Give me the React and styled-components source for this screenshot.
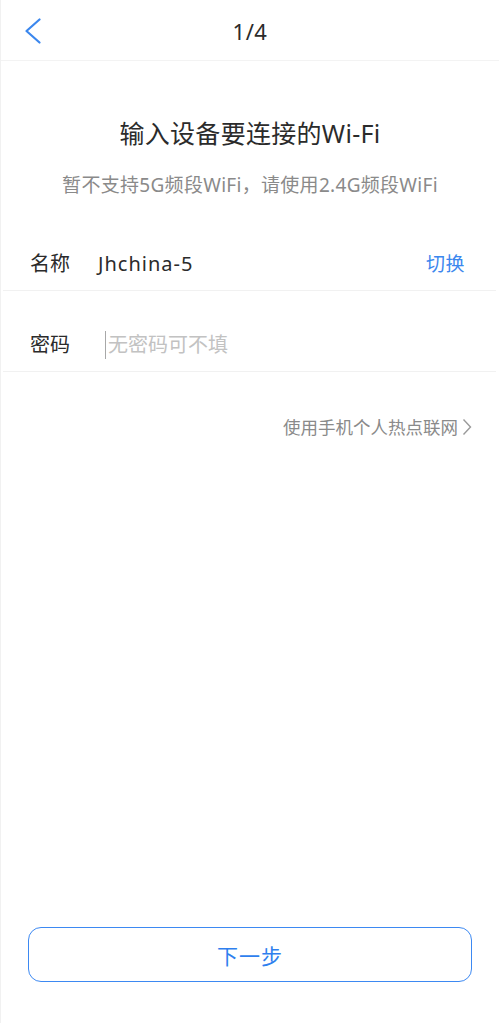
import React from "react";
import styled, { createGlobalStyle } from "styled-components";

const GlobalStyle = createGlobalStyle`
  html, body { margin: 0; padding: 0; background: #fff; }
  body { font-family: "Noto Sans", "Noto Sans CJK SC", sans-serif; color: #333; }
  * { box-sizing: border-box; }
`;

const Page = styled.div`
  height: 100vh;
  display: flex;
  flex-direction: column;
  background: #fff;
  border-left: 1px solid #f1f1f1;
`;

const Header = styled.header`
  height: 61px;
  display: grid;
  grid-template-columns: 1fr auto 1fr;
  align-items: center;
  border-bottom: 1px solid #f3f3f3;
  padding: 2px 24px 0 24px;
`;

const BackButton = styled.button`
  justify-self: start;
  width: 16px;
  height: 26px;
  padding: 0;
  border: 0;
  background: none;
  display: flex;
  align-items: center;
  justify-content: center;
`;

const HeaderTitle = styled.h1`
  margin: 0;
  font-size: 22px;
  font-weight: 400;
  color: #2b2b2b;
  letter-spacing: 0.5px;
`;

const Intro = styled.section`
  display: flex;
  flex-direction: column;
  align-items: center;
  margin-top: 56px;
`;

const Title = styled.h2`
  margin: 0;
  font-size: 25px;
  line-height: 32px;
  font-weight: 400;
  color: #2b2b2b;
  letter-spacing: 0.3px;
`;

const Subtitle = styled.p`
  margin: 24px 0 0;
  font-size: 19px;
  line-height: 24px;
  color: #8a8a8a;
  letter-spacing: 0.3px;
`;

const Form = styled.div`
  margin-top: 13px;
  display: flex;
  flex-direction: column;
`;

const Row = styled.div`
  display: flex;
  align-items: center;
  padding: 40px 31px 12px 29px;
  margin: 0 3px 0 2px;
  border-bottom: 1px solid #f1f1f1;
`;

const Label = styled.span`
  font-size: 20px;
  line-height: 28px;
  color: #2b2b2b;
  width: 68px;
  margin-left: -2px;
  flex: none;
`;

const Value = styled.span`
  flex: 1;
  font-size: 20px;
  line-height: 28px;
  color: #2b2b2b;
  letter-spacing: 1px;
`;

const Action = styled.button`
  border: 0;
  background: none;
  padding: 0;
  font-family: inherit;
  font-size: 19px;
  line-height: 28px;
  color: #3b87ee;
  letter-spacing: 0.5px;
`;

const PasswordInput = styled.input`
  flex: 1;
  border: 0;
  outline: none;
  padding: 0 0 0 2px;
  margin-left: 7px;
  font-family: inherit;
  font-size: 20px;
  line-height: 28px;
  color: #2b2b2b;
  background: none;
  border-left: 1.5px solid #a8a8a8;
  &::placeholder { color: #c2c2c2; }
`;

const HotspotLink = styled.a`
  align-self: flex-end;
  margin: 43px 27px 0 0;
  display: flex;
  align-items: center;
  gap: 4px;
  font-size: 17.5px;
  line-height: 24px;
  color: #8a8a8a;
  text-decoration: none;
`;

const Footer = styled.div`
  margin-top: auto;
  padding: 0 27px 41px 27px;
`;

const NextButton = styled.button`
  width: 100%;
  height: 55px;
  border: 1.5px solid #3d89f2;
  border-radius: 13px;
  background: #fff;
  font-family: inherit;
  font-size: 21px;
  color: #2f7fee;
  letter-spacing: 1px;
`;

export default function App() {
  return (
    <Page>
      <GlobalStyle />
      <Header>
        <BackButton aria-label="返回">
          <svg width="16" height="26" viewBox="0 0 16 26" fill="none">
            <polyline
              points="14.5,1.5 1.5,13 14.5,24.5"
              stroke="#3b87ee"
              strokeWidth="2.2"
              strokeLinecap="round"
              strokeLinejoin="round"
            />
          </svg>
        </BackButton>
        <HeaderTitle>1/4</HeaderTitle>
        <span />
      </Header>
      <Intro>
        <Title>输入设备要连接的Wi-Fi</Title>
        <Subtitle>暂不支持5G频段WiFi，请使用2.4G频段WiFi</Subtitle>
      </Intro>
      <Form>
        <Row>
          <Label>名称</Label>
          <Value>Jhchina-5</Value>
          <Action>切换</Action>
        </Row>
        <Row>
          <Label>密码</Label>
          <PasswordInput type="password" placeholder="无密码可不填" />
        </Row>
        <HotspotLink href="#">
          使用手机个人热点联网
          <svg width="10" height="18" viewBox="0 0 10 18" fill="none">
            <polyline points="1.5,1.5 8.5,9 1.5,16.5" stroke="#9a9a9a" strokeWidth="1.4" />
          </svg>
        </HotspotLink>
      </Form>
      <Footer>
        <NextButton>下一步</NextButton>
      </Footer>
    </Page>
  );
}
